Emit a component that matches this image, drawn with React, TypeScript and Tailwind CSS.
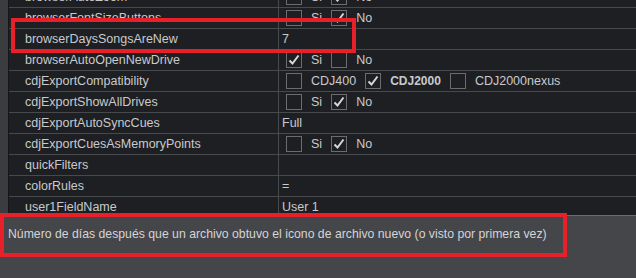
import { type ReactNode } from 'react';

type Opt = { label: string; checked: boolean; bold?: boolean };
type Row = { name: string; text?: string; opts?: Opt[] };

const siNo = (si: boolean): Opt[] => [
  { label: 'Si', checked: si },
  { label: 'No', checked: !si },
];

const rows: Row[] = [
  { name: 'browserAutoZoom', opts: siNo(false) },
  { name: 'browserFontSizeButtons', opts: siNo(false) },
  { name: 'browserDaysSongsAreNew', text: '7' },
  { name: 'browserAutoOpenNewDrive', opts: siNo(true) },
  {
    name: 'cdjExportCompatibility',
    opts: [
      { label: 'CDJ400', checked: false },
      { label: 'CDJ2000', checked: true, bold: true },
      { label: 'CDJ2000nexus', checked: false },
    ],
  },
  { name: 'cdjExportShowAllDrives', opts: siNo(false) },
  { name: 'cdjExportAutoSyncCues', text: 'Full' },
  { name: 'cdjExportCuesAsMemoryPoints', opts: siNo(false) },
  { name: 'quickFilters', text: '' },
  { name: 'colorRules', text: '=' },
  { name: 'user1FieldName', text: 'User 1' },
];

const Check = ({ checked }: { checked: boolean }) => (
  <span className="flex h-[16px] w-[16px] items-center justify-center border border-[#6b6c70] bg-[#1e1f22]">
    {checked && (
      <svg width="12" height="12" viewBox="0 0 12 12">
        <path d="M1.5 6.5 L4.5 9.5 L10.5 1.5" fill="none" stroke="#d8d8d8" strokeWidth="2" />
      </svg>
    )}
  </span>
);

const Cell = ({ children }: { children: ReactNode }) => (
  <div className="flex h-[20px] items-center">{children}</div>
);

export default function App() {
  return (
    <div
      className="relative flex h-[278px] w-[636px] flex-col overflow-hidden bg-[#45464a] text-[12.5px] text-[#c9cacc]"
      style={{ fontFamily: '"Liberation Sans", Arial, sans-serif' }}
    >
      <div className="flex h-[215px] overflow-hidden">
        <div className="w-[8px] bg-[#3b3c40]" />
        <div className="flex-1 border-l border-[#151618] bg-[#1e1f22]">
          <div className="-mt-[13px]">
            {rows.map((r) => (
              <div key={r.name} className="flex border-b border-[#48494d]">
                <div className="w-[270px] border-r border-[#48494d] pl-[16px]">
                  <Cell>{r.name}</Cell>
                </div>
                <div className="flex-1">
                  {r.opts ? (
                    <Cell>
                      <div className="flex items-center pl-[7px]">
                        {r.opts.map((o) => (
                          <div key={o.label} className="mr-[9px] flex items-center gap-[9px]">
                            <Check checked={o.checked} />
                            <span className={o.bold ? 'text-[12px] font-bold' : ''}>{o.label}</span>
                          </div>
                        ))}
                      </div>
                    </Cell>
                  ) : (
                    <Cell>
                      <span className="pl-[3px]">{r.text}</span>
                    </Cell>
                  )}
                </div>
              </div>
            ))}
          </div>
        </div>
      </div>
      <div className="h-[1px] bg-[#6a6b6f]" />
      <div className="flex-1 bg-[#45464a] pl-[8px] pt-[9px] text-[12.25px] text-[#d4d4d6]">
        Número de días después que un archivo obtuvo el icono de archivo nuevo (o visto por primera vez)
      </div>

      <div className="pointer-events-none absolute left-[11px] top-[18px] h-[35px] w-[345px] border-[4px] border-[#e8202a]" />
      <div className="pointer-events-none absolute left-0 top-[213px] h-[44px] w-[567px] border-[4px] border-[#e8202a]" />
    </div>
  );
}
